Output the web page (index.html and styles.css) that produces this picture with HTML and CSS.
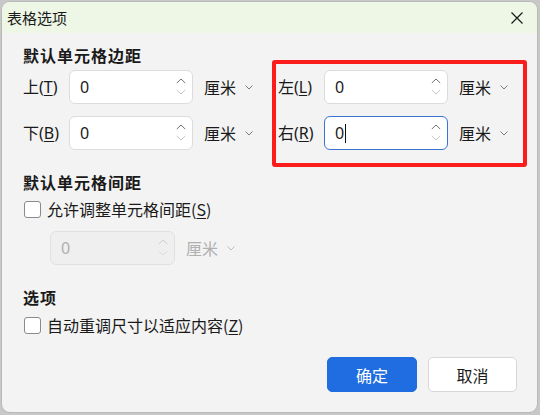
FILE: index.html
```html
<!DOCTYPE html>
<html lang="zh-CN">
<head>
<meta charset="utf-8">
<title>表格选项</title>
<link rel="stylesheet" href="styles.css">
</head>
<body>
<div class="window">
  <div class="titlebar">
    <span class="title">表格选项</span>
    <span class="close">
      <svg width="12" height="12" viewBox="0 0 12 12"><path d="M0.5 0.5 L11.5 11.5 M11.5 0.5 L0.5 11.5" stroke="#1a1a1a" stroke-width="1.2" fill="none"/></svg>
    </span>
  </div>
  <div class="content">
    <div class="heading">默认单元格边距</div>
    <div class="margins">
      <div class="field">
        <span class="lbl">上(<u>T</u>)</span>
        <div class="spin"><span class="val">0</span>
          <svg class="arrows" width="10" height="18" viewBox="0 0 10 18"><path d="M0.8 5 L5 1 L9.2 5" stroke="#707070" fill="none"/><path d="M0.8 12 L5 16 L9.2 12" stroke="#c4c4c4" fill="none"/></svg>
        </div>
        <span class="unit">厘米</span>
        <svg class="chev" width="8" height="5" viewBox="0 0 8 5"><path d="M0.5 0.5 L4 4 L7.5 0.5" stroke="#7a7a7a" fill="none"/></svg>
      </div>
      <div class="field">
        <span class="lbl">左(<u>L</u>)</span>
        <div class="spin"><span class="val">0</span>
          <svg class="arrows" width="10" height="18" viewBox="0 0 10 18"><path d="M0.8 5 L5 1 L9.2 5" stroke="#707070" fill="none"/><path d="M0.8 12 L5 16 L9.2 12" stroke="#c4c4c4" fill="none"/></svg>
        </div>
        <span class="unit">厘米</span>
        <svg class="chev" width="8" height="5" viewBox="0 0 8 5"><path d="M0.5 0.5 L4 4 L7.5 0.5" stroke="#7a7a7a" fill="none"/></svg>
      </div>
      <div class="field">
        <span class="lbl">下(<u>B</u>)</span>
        <div class="spin"><span class="val">0</span>
          <svg class="arrows" width="10" height="18" viewBox="0 0 10 18"><path d="M0.8 5 L5 1 L9.2 5" stroke="#707070" fill="none"/><path d="M0.8 12 L5 16 L9.2 12" stroke="#c4c4c4" fill="none"/></svg>
        </div>
        <span class="unit">厘米</span>
        <svg class="chev" width="8" height="5" viewBox="0 0 8 5"><path d="M0.5 0.5 L4 4 L7.5 0.5" stroke="#7a7a7a" fill="none"/></svg>
      </div>
      <div class="field">
        <span class="lbl">右(<u>R</u>)</span>
        <div class="spin focused"><span class="val">0</span><span class="caret"></span>
          <svg class="arrows" width="10" height="18" viewBox="0 0 10 18"><path d="M0.8 5 L5 1 L9.2 5" stroke="#707070" fill="none"/><path d="M0.8 12 L5 16 L9.2 12" stroke="#c4c4c4" fill="none"/></svg>
        </div>
        <span class="unit">厘米</span>
        <svg class="chev" width="8" height="5" viewBox="0 0 8 5"><path d="M0.5 0.5 L4 4 L7.5 0.5" stroke="#7a7a7a" fill="none"/></svg>
      </div>
    </div>

    <div class="heading sec">默认单元格间距</div>
    <div class="check first"><span class="box"></span><span>允许调整单元格间距(<u>S</u>)</span></div>
    <div class="field indent disabled">
      <div class="spin"><span class="val">0</span>
        <svg class="arrows" width="10" height="18" viewBox="0 0 10 18"><path d="M0.8 5 L5 1 L9.2 5" stroke="#cfcfcf" fill="none"/><path d="M0.8 12 L5 16 L9.2 12" stroke="#dcdcdc" fill="none"/></svg>
      </div>
      <span class="unit">厘米</span>
      <svg class="chev" width="8" height="5" viewBox="0 0 8 5"><path d="M0.5 0.5 L4 4 L7.5 0.5" stroke="#bdbdbd" fill="none"/></svg>
    </div>

    <div class="heading sec">选项</div>
    <div class="check second"><span class="box"></span><span>自动重调尺寸以适应内容(<u>Z</u>)</span></div>

    <div class="actions">
      <button class="btn primary">确定</button>
      <button class="btn">取消</button>
    </div>
  </div>
  <div class="annot"></div>
</div>
</body>
</html>
```

FILE: styles.css
```css
* { box-sizing: border-box; }

html, body {
  margin: 0;
  padding: 0;
  width: 540px;
  height: 415px;
  background: #c8c8c8;
  overflow: hidden;
}

body {
  font-family: "Noto Sans", "Noto Sans CJK SC", sans-serif;
  font-size: 16px;
  color: #1a1a1a;
  padding: 2px 0 0 2px;
}

.window {
  position: relative;
  width: 535px;
  height: 410px;
  background: #f3f3f3;
  border-radius: 8px;
  overflow: hidden;
  box-shadow: 0 0 0 1px #b9b9b9;
}

.titlebar {
  height: 31px;
  background: #eef7e6;
  display: flex;
  align-items: center;
  justify-content: space-between;
  padding: 0 14px 0 5px;
}

.title {
  font-size: 15px;
  line-height: 20px;
  font-family: "Noto Sans CJK SC", sans-serif;
}

.close {
  display: flex;
  width: 12px;
  height: 12px;
}

.content {
  padding: 12px 20px 0 21px;
  display: flex;
  flex-direction: column;
}

.heading {
  font-family: "Noto Sans CJK SC", sans-serif;
  font-weight: bold;
  font-size: 16px;
  line-height: 20px;
  height: 20px;
  letter-spacing: 1px;
}

.heading.sec { margin-top: 22px; }

.margins {
  margin-top: 5px;
  display: grid;
  grid-template-columns: 255px 255px;
  row-gap: 12px;
}

.field {
  display: flex;
  align-items: center;
  height: 34px;
}

.lbl {
  width: 46px;
  line-height: 20px;
}

.lbl u, .check u { text-underline-offset: 2px; }

.spin {
  width: 124px;
  height: 34px;
  background: #ffffff;
  border: 1px solid #dcdcdc;
  border-radius: 6px;
  display: flex;
  align-items: center;
  padding: 0 6px 0 10px;
}

.spin .val {
  line-height: 20px;
}

.spin .arrows {
  margin-left: auto;
}

.spin.focused {
  border-color: #3b73d2;
}

.caret {
  width: 1px;
  height: 19px;
  background: #111;
  margin-left: 1px;
}

.unit {
  margin-left: 11px;
  line-height: 20px;
  font-family: "Noto Sans CJK SC", sans-serif;
}

.chev {
  margin-left: 9px;
}

.check {
  display: flex;
  align-items: center;
  height: 24px;
  line-height: 20px;
  font-family: "Noto Sans CJK SC", sans-serif;
}

.check.first { margin-top: 5px; }
.check.second { margin-top: 6px; }

.check .box {
  width: 17px;
  height: 17px;
  border: 1px solid #8a8a8a;
  border-radius: 3px;
  background: #ffffff;
  margin: 0 6px 0 1px;
}

.field.indent {
  margin-top: 10px;
  margin-left: 27px;
}

.disabled .spin {
  width: 125px;
  background: #efefef;
  border-color: #e1e1e1;
  color: #b0b0b0;
}

.disabled .unit {
  color: #b0b0b0;
}

.actions {
  margin-top: 20px;
  display: flex;
  justify-content: flex-end;
  gap: 11px;
}

.btn {
  width: 89px;
  height: 35px;
  border-radius: 5px;
  border: 1px solid #d6d6d6;
  background: #ffffff;
  font-family: "Noto Sans CJK SC", sans-serif;
  font-size: 16px;
  color: #1a1a1a;
  padding: 0;
}

.btn.primary {
  width: 90px;
  background: #1f6de0;
  border-color: #1f6de0;
  color: #ffffff;
}

.annot {
  position: absolute;
  left: 270px;
  top: 58px;
  width: 255px;
  height: 107px;
  border: 4px solid #fb1c1c;
  border-radius: 3px;
  pointer-events: none;
}
```
